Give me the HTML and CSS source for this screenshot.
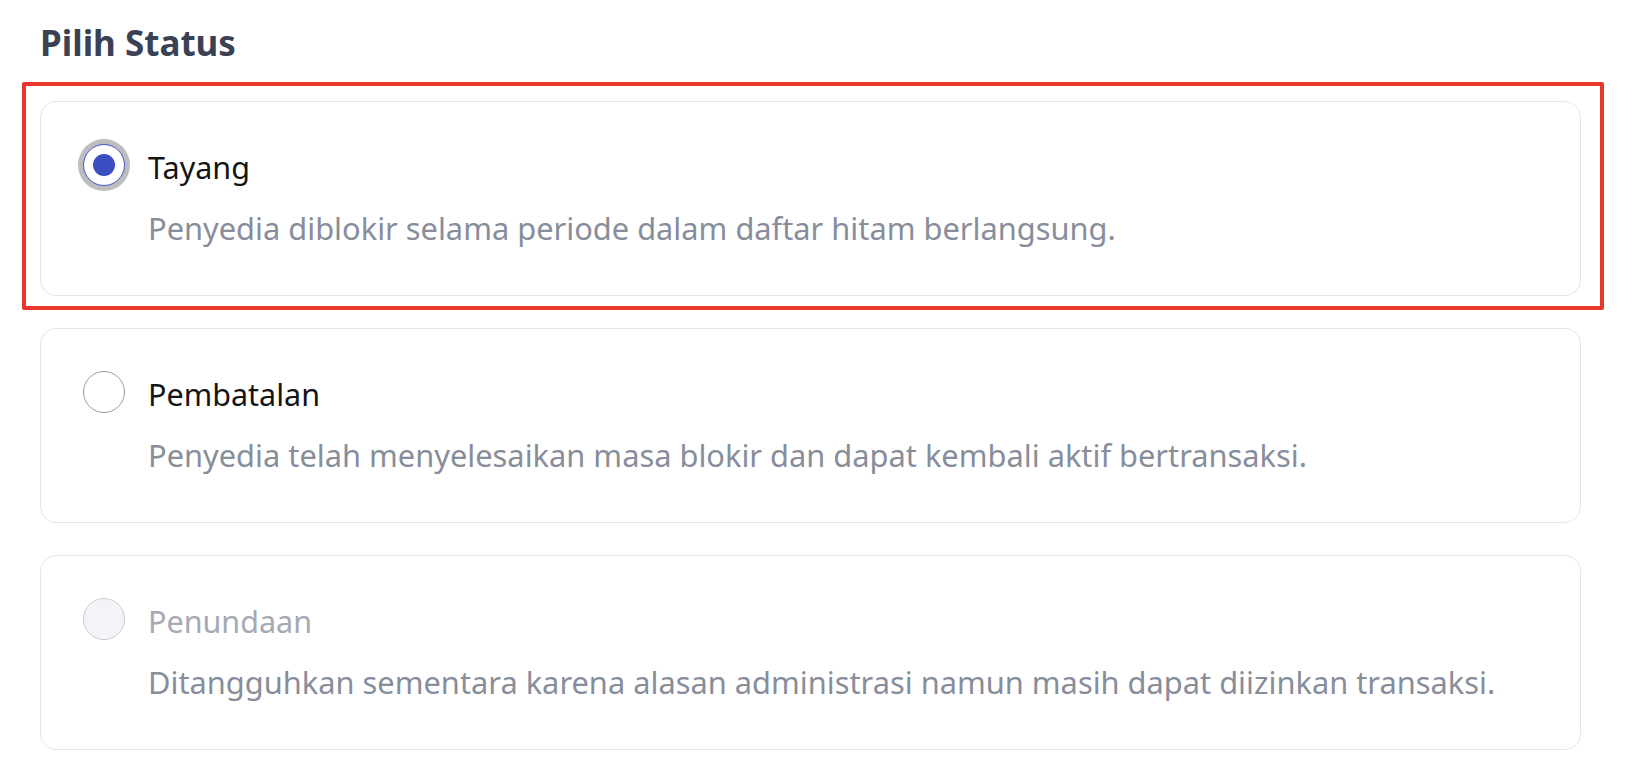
FILE: index.html
```html
<!DOCTYPE html>
<html lang="id">
<head>
<meta charset="utf-8">
<title>Pilih Status</title>
<link rel="stylesheet" href="styles.css">
</head>
<body>
<main class="page">
  <h2 class="heading">Pilih Status</h2>
  <div class="options">
    <label class="option option--selected">
      <span class="highlight"></span>
      <span class="row">
        <span class="radio radio--checked"><span class="dot"></span></span>
        <span class="title">Tayang</span>
      </span>
      <span class="desc">Penyedia diblokir selama periode dalam daftar hitam berlangsung.</span>
    </label>
    <label class="option">
      <span class="row">
        <span class="radio"></span>
        <span class="title">Pembatalan</span>
      </span>
      <span class="desc">Penyedia telah menyelesaikan masa blokir dan dapat kembali aktif bertransaksi.</span>
    </label>
    <label class="option option--disabled">
      <span class="row">
        <span class="radio radio--disabled"></span>
        <span class="title">Penundaan</span>
      </span>
      <span class="desc">Ditangguhkan sementara karena alasan administrasi namun masih dapat diizinkan transaksi.</span>
    </label>
  </div>
</main>
</body>
</html>
```

FILE: styles.css
```css
* { box-sizing: border-box; }
html, body { margin: 0; padding: 0; background: #ffffff; }
body { font-family: "Noto Sans", "Open Sans", sans-serif; }

.page {
  padding: 19px 51px 0 40px;
}

.heading {
  margin: 0 0 34px 0;
  font-size: 35px;
  line-height: 48px;
  font-weight: 700;
  color: #3a4155;
}

.options {
  display: flex;
  flex-direction: column;
  gap: 32px;
}

.option {
  position: relative;
  display: flex;
  flex-direction: column;
  border: 1px solid #e5e6ea;
  border-radius: 16px;
  padding: 42px 40px 46px 42px;
  background: #fff;
}

.highlight {
  position: absolute;
  top: -20px;
  left: -19px;
  right: -24px;
  bottom: -15px;
  border: 4px solid #e8382c;
  border-radius: 2px;
  pointer-events: none;
}

.row {
  display: flex;
  align-items: center;
  gap: 23px;
  height: 42px;
}

.radio {
  flex: 0 0 42px;
  width: 42px;
  height: 42px;
  border-radius: 50%;
  border: 1.5px solid #9a9ead;
  background: #fff;
  display: flex;
  align-items: center;
  justify-content: center;
}

.radio--checked {
  border: 1.5px solid #4456c7;
  box-shadow: 0 0 0 5px #bdbdbf;
}

.dot {
  width: 22px;
  height: 22px;
  border-radius: 50%;
  background: #3b4fc2;
}

.radio--disabled {
  background: #f3f4f8;
  border-color: #c9cbd1;
}

.title {
  padding-top: 4px;
  font-size: 30.5px;
  line-height: 38px;
  color: #141414;
}

.option--disabled .title {
  color: #a5a9b3;
}

.desc {
  margin: 21px 0 0 65px;
  font-size: 30.8px;
  line-height: 42px;
  color: #878d9a;
}
```
